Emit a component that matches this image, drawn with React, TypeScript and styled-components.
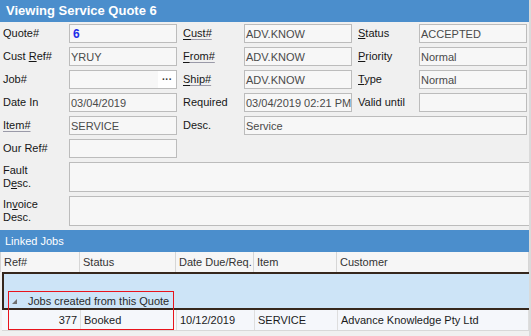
import React from "react"
import styled, { createGlobalStyle } from "styled-components"

const GlobalStyle = createGlobalStyle`
  html, body {
    margin: 0;
    padding: 0;
    background: #f0f0f0;
    overflow: hidden;
  }
  body {
    font-family: "Liberation Sans", Arial, sans-serif;
    font-size: 11px;
    color: #1b1b1b;
  }
`

const Window = styled.div`
  width: 529px;
  height: 336px;
  border-right: 2px solid #dadada;
  background: #f0f0f0;
  position: relative;
  overflow: hidden;
`

const TitleBar = styled.div`
  height: 22px;
  background: #4b8ecc;
  color: #fff;
  font-weight: bold;
  font-size: 13px;
  line-height: 22px;
  padding-left: 6px;
`

const Form = styled.div`
  display: grid;
  grid-template-columns: 66px 108px 67px 108px 67px 108px 3px;
  grid-template-rows: repeat(6, 19px) 30px 30px;
  row-gap: 4px;
  padding: 2px 0 0 3px;
`

const Label = styled.div<{ $indent?: boolean }>`
  display: flex;
  align-items: center;
  padding-left: ${(p) => (p.$indent ? "6px" : "0")};
  line-height: 13px;
  color: #161616;
  white-space: nowrap;
`

const Key = styled.span`
  text-decoration: underline;
  text-decoration-color: #161616;
`

const Link = styled.span`
  text-decoration: underline;
  text-decoration-color: #9a9aa8;
  text-underline-offset: 2px;
`

const Field = styled.div<{ $span?: string }>`
  grid-column: ${(p) => p.$span || "auto"};
  display: flex;
  align-items: center;
  box-sizing: border-box;
  border: 1px solid #bcbcbc;
  background: #f7f7f7;
  color: #4a4a4a;
  padding-left: 1px;
  white-space: nowrap;
  overflow: hidden;
`

const QuoteNo = styled.span`
  color: #1e2ee8;
  font-weight: bold;
  font-size: 12px;
  padding-left: 2px;
`

const Ellipsis = styled.div`
  margin-left: auto;
  width: 18px;
  height: 100%;
  background: #fff;
  display: flex;
  align-items: center;
  justify-content: center;
  color: #333;
  font-weight: bold;
  font-size: 10px;
`

const SectionBar = styled.div`
  margin-top: 4px;
  height: 22px;
  background: #4b8ecc;
  color: #fff;
  line-height: 22px;
  padding-left: 5px;
`

const cols = "79px 96px 78px 83px 1fr"

const HeaderRow = styled.div`
  display: grid;
  grid-template-columns: ${cols};
  height: 20px;
  background: #f6f6f6;
  color: #333;
  border-left: 1px solid #d4d4d4;
`

const HeadCell = styled.div`
  display: flex;
  align-items: center;
  padding-left: 3px;
  border-right: 1px solid #d6d6d6;
`

const GroupPanel = styled.div`
  height: 34px;
  margin-left: 2px;
  background: #cde4f7;
  border: 2px solid #35271d;
  border-right: none;
  display: flex;
  align-items: flex-end;
`

const GroupRow = styled.div`
  height: 15px;
  display: flex;
  align-items: center;
  padding-left: 8px;
  color: #2a2a2a;
  gap: 11px;
`

const Arrow = styled.span`
  width: 0;
  height: 0;
  border-left: 5px solid transparent;
  border-bottom: 5px solid #6f6f6f;
  margin-top: 2px;
`

const DataRow = styled.div`
  display: grid;
  grid-template-columns: ${cols};
  height: 20px;
  margin-left: 2px;
  background: #f5f7fb;
  border-bottom: 1px solid #d8d8d8;
  color: #1b1b1b;
`

const DataCell = styled.div<{ $right?: boolean }>`
  display: flex;
  align-items: center;
  justify-content: ${(p) => (p.$right ? "flex-end" : "flex-start")};
  padding: 0 3px;
  border-right: 1px solid #dedede;
  white-space: nowrap;
`

const Highlight = styled.div`
  position: absolute;
  left: 8px;
  top: 291px;
  width: 164px;
  height: 37px;
  border: 1px solid #e8141c;
  pointer-events: none;
`

export default function App() {
  return (
    <Window>
      <GlobalStyle />
      <TitleBar>Viewing Service Quote 6</TitleBar>
      <Form>
        <Label><span>Quote#</span></Label>
        <Field><QuoteNo>6</QuoteNo></Field>
        <Label $indent><Link><Key>C</Key>ust#</Link></Label>
        <Field>ADV.KNOW</Field>
        <Label $indent><span><Key>S</Key>tatus</span></Label>
        <Field>ACCEPTED</Field>
        <div />

        <Label><span>Cust <Key>R</Key>ef#</span></Label>
        <Field>YRUY</Field>
        <Label $indent><Link><Key>F</Key>rom#</Link></Label>
        <Field>ADV.KNOW</Field>
        <Label $indent><span><Key>P</Key>riority</span></Label>
        <Field>Normal</Field>
        <div />

        <Label><span>Job#</span></Label>
        <Field><Ellipsis>···</Ellipsis></Field>
        <Label $indent><Link><Key>S</Key>hip#</Link></Label>
        <Field>ADV.KNOW</Field>
        <Label $indent><span><Key>T</Key>ype</span></Label>
        <Field>Normal</Field>
        <div />

        <Label><span>Date In</span></Label>
        <Field>03/04/2019</Field>
        <Label $indent><span>Required</span></Label>
        <Field>03/04/2019 02:21 PM</Field>
        <Label $indent><span>Valid until</span></Label>
        <Field />
        <div />

        <Label><Link>Item#</Link></Label>
        <Field>SERVICE</Field>
        <Label $indent><span>Desc.</span></Label>
        <Field $span="span 3">Service</Field>
        <div />

        <Label><span>Our Ref#</span></Label>
        <Field />
        <div style={{ gridColumn: "span 5" }} />

        <Label><span>Fault<br />D<Key>e</Key>sc.</span></Label>
        <Field $span="2 / -1" />

        <Label><span>In<Key>v</Key>oice<br />Desc.</span></Label>
        <Field $span="2 / -1" />
      </Form>

      <SectionBar>Linked Jobs</SectionBar>
      <HeaderRow>
        <HeadCell>Ref#</HeadCell>
        <HeadCell>Status</HeadCell>
        <HeadCell>Date Due/Req.</HeadCell>
        <HeadCell>Item</HeadCell>
        <HeadCell>Customer</HeadCell>
      </HeaderRow>
      <GroupPanel>
        <GroupRow>
          <Arrow />
          <span>Jobs created from this Quote</span>
        </GroupRow>
      </GroupPanel>
      <DataRow>
        <DataCell $right>377</DataCell>
        <DataCell>Booked</DataCell>
        <DataCell>10/12/2019</DataCell>
        <DataCell>SERVICE</DataCell>
        <DataCell>Advance Knowledge Pty Ltd</DataCell>
      </DataRow>
      <Highlight />
    </Window>
  )
}
